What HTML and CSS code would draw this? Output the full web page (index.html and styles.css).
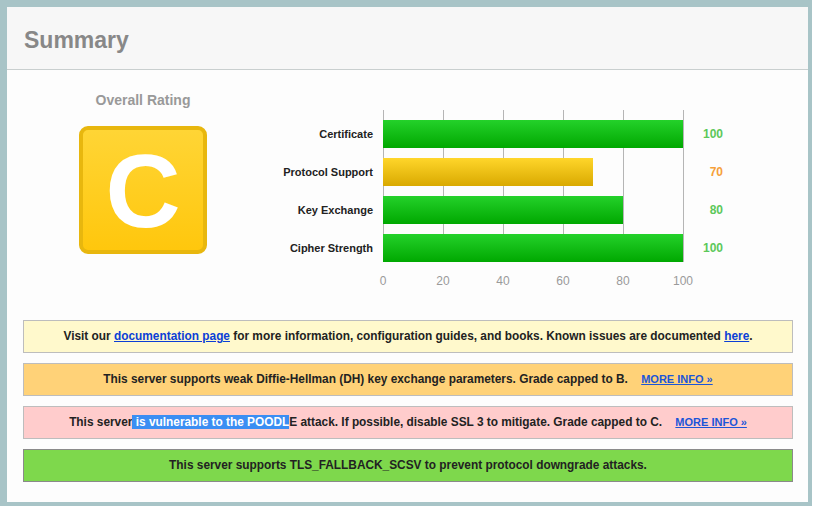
FILE: index.html
```html
<!DOCTYPE html>
<html>
<head>
<meta charset="utf-8">
<link rel="stylesheet" href="styles.css">
</head>
<body>
<div class="frame">
  <div class="panel">
    <div class="header"><h1 class="title">Summary</h1></div>
    <div class="content">
      <div class="top">
        <div class="rating">
          <div class="rating-label">Overall Rating</div>
          <div class="grade">C</div>
        </div>
        <div class="chart">
          <div class="labels">
            <div class="label">Certificate</div>
            <div class="label">Protocol Support</div>
            <div class="label">Key Exchange</div>
            <div class="label">Cipher Strength</div>
          </div>
          <div class="plot-col">
            <div class="plot">
              <div class="bar green" style="width:300px"></div>
              <div class="bar yellow" style="width:210px"></div>
              <div class="bar green" style="width:240px"></div>
              <div class="bar green" style="width:300px"></div>
            </div>
            <div class="axis">
              <span class="tick">0</span>
              <span class="tick">20</span>
              <span class="tick">40</span>
              <span class="tick">60</span>
              <span class="tick">80</span>
              <span class="tick">100</span>
            </div>
          </div>
          <div class="values">
            <div class="value good">100</div>
            <div class="value warn">70</div>
            <div class="value good">80</div>
            <div class="value good">100</div>
          </div>
        </div>
      </div>
      <div class="notices">
        <div class="notice info">Visit our <a href="#">documentation page</a> for more information, configuration guides, and books. Known issues are documented <a href="#">here</a>.</div>
        <div class="notice warning">This server supports weak Diffie-Hellman (DH) key exchange parameters. Grade capped to B. <a class="more" href="#">MORE INFO »</a></div>
        <div class="notice error">This server<span class="sel"> is vulnerable to the POODL</span>E attack. If possible, disable SSL 3 to mitigate. Grade capped to C. <a class="more" href="#">MORE INFO »</a></div>
        <div class="notice good-box">This server supports TLS_FALLBACK_SCSV to prevent protocol downgrade attacks.</div>
      </div>
    </div>
  </div>
</div>
</body>
</html>
```

FILE: styles.css
```css
html, body {
  margin: 0;
  padding: 0;
  background: #ffffff;
}
body {
  font-family: "Liberation Sans", Arial, sans-serif;
  width: 819px;
  height: 511px;
  overflow: hidden;
}
.frame {
  width: 801px;
  height: 495px;
  border-style: solid;
  border-color: #a8c4c7;
  border-width: 7px 4px 4px 7px;
}
.panel {
  background: #fdfdfd;
  height: 100%;
}
.header {
  background: #f7f7f7;
  border-bottom: 1px solid #c9cfcf;
  height: 63px;
  padding-left: 17px;
  padding-top: 4px;
  box-sizing: border-box;
  display: flex;
  align-items: center;
}
.title {
  margin: 0;
  font-size: 23px;
  font-weight: bold;
  color: #888888;
}
.content {
  padding: 0 15px 0 16px;
}
.top {
  display: flex;
  height: 250px;
}
.rating {
  width: 240px;
  display: flex;
  flex-direction: column;
  align-items: center;
  padding-top: 22px;
}
.rating-label {
  font-size: 14px;
  line-height: 16px;
  font-weight: bold;
  color: #999999;
}
.grade {
  margin-top: 18px;
  width: 120px;
  height: 120px;
  border: 4px solid #e8b70e;
  border-radius: 9px;
  background: linear-gradient(to bottom, #ffd535, #ffc70d);
  color: #ffffff;
  font-size: 104px;
  font-weight: bold;
  line-height: 122px;
  text-align: center;
}
.chart {
  display: flex;
  padding-top: 40px;
}
.labels, .values {
  display: flex;
  flex-direction: column;
  gap: 10px;
  padding-top: 10px;
}
.labels {
  width: 110px;
  padding-right: 10px;
}
.label {
  height: 28px;
  line-height: 28px;
  font-size: 11px;
  font-weight: bold;
  color: #222222;
  text-align: right;
}
.plot-col {
  width: 301px;
}
.plot {
  width: 301px;
  height: 152px;
  box-sizing: border-box;
  padding-top: 10px;
  display: flex;
  flex-direction: column;
  gap: 10px;
  background-image: linear-gradient(to right, #b5b5b5 1px, transparent 1px);
  background-size: 60px 100%;
}
.bar {
  height: 28px;
}
.bar.green {
  background: linear-gradient(to bottom, #24d12a, #00a800);
}
.bar.yellow {
  background: linear-gradient(to bottom, #ffd62a, #d9a900);
}
.axis {
  display: flex;
  width: 360px;
  margin-left: -30px;
  margin-top: 12px;
}
.tick {
  flex: none;
  width: 60px;
  text-align: center;
  font-size: 12px;
  line-height: 14px;
  color: #9a9a9a;
}
.values {
  width: 39px;
}
.value {
  height: 28px;
  line-height: 28px;
  font-size: 12px;
  font-weight: bold;
  text-align: right;
}
.value.good { color: #5cc85a; }
.value.warn { color: #f6a03a; }
.notices {
  display: flex;
  flex-direction: column;
  gap: 10px;
}
.notice {
  height: 33px;
  box-sizing: border-box;
  border: 1px solid #bdbdbd;
  display: flex;
  align-items: center;
  justify-content: center;
  padding-bottom: 1px;
  font-size: 11.86px;
  font-weight: bold;
  color: #222222;
  white-space: pre;
}
.notice a {
  color: #0b3fd6;
}
.notice a.more {
  font-size: 11px;
  margin-left: 10px;
  color: #1c55d8;
}
.info { background: #fff9cc; }
.warning { background: #ffd278; }
.error { background: #ffcccc; }
.good-box {
  background: #7ed84c;
  border-color: #8a8a8a;
}
.sel {
  background: #3b8ef3;
  color: #ffffff;
}
```
